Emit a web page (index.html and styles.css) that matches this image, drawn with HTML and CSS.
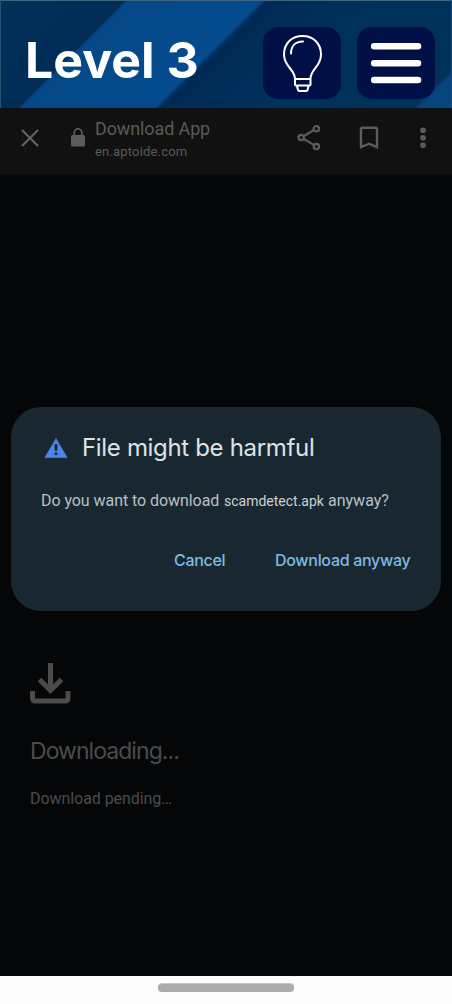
FILE: index.html
```html
<!DOCTYPE html>
<html lang="en">
<head>
<meta charset="utf-8">
<title>Level 3</title>
<link rel="stylesheet" href="styles.css">
</head>
<body>
<div class="screen">
  <header class="game-header">
    <h1 class="level">Level 3</h1>
    <button class="game-button" aria-label="Hint">
      <svg width="78" height="72" viewBox="0 0 78 72" fill="none" stroke="#fff" stroke-width="2" stroke-linecap="round" stroke-linejoin="round">
        <path d="M32 52C32 42 21 40 21 27.500C21 16 29 9 39.500 9S58 16 58 27.500C58 40 47.500 42 47.500 52ZM32 52V57.500Q32 58.500 33 58.500H46.500Q47.500 58.500 47.500 57.500V52M34 59L35 63Q35.500 64 36.500 64H43Q44 64 44.500 63L45.500 59"/>
        <path d="M28 26.500C28 19.500 32 14.500 40 14.500"/>
      </svg>
    </button>
    <button class="game-button" aria-label="Menu">
      <svg width="78" height="72" viewBox="0 0 78 72" stroke="#fff" stroke-width="6.600" stroke-linecap="round">
        <path d="M17.200 19.300H61M17.200 36.200H61M17.200 53H61"/>
      </svg>
    </button>
  </header>
  <div class="browser-bar">
    <svg class="close" width="20" height="20" viewBox="0 0 20 20" fill="none" stroke="#626262" stroke-width="2.200"><path d="M2 2L18 18M18 2L2 18"/></svg>
    <svg class="lock" width="16" height="20" viewBox="0 0 16 20"><rect x="1" y="7" width="14" height="11.500" rx="1.500" fill="#5c5c5c"/><path d="M4.200 8V4.700a3.800 3.800 0 0 1 7.600 0V8" fill="none" stroke="#5c5c5c" stroke-width="1.700"/></svg>
    <div class="site">
      <div class="site-title">Download App</div>
      <div class="site-url">en.aptoide.com</div>
    </div>
    <svg class="share" width="24" height="28" viewBox="0 0 24 28" fill="none" stroke="#5c5c5c" stroke-width="2.200"><circle cx="4.200" cy="13.500" r="2.700"/><circle cx="19.400" cy="4.700" r="2.700"/><circle cx="19.400" cy="22.500" r="2.700"/><path d="M6.500 12.200L17 6M6.500 14.800L17 21.100"/></svg>
    <svg class="bookmark" width="20" height="24" viewBox="0 0 20 24" fill="none" stroke="#5c5c5c" stroke-width="2.400"><path d="M2 21.200V3.200Q2 1.700 3.500 1.700H16.500Q18 1.700 18 3.200V21.200L10 17.700Z"/></svg>
    <svg class="more" width="6" height="22" viewBox="0 0 6 22" fill="#5c5c5c"><circle cx="3" cy="3.200" r="2.800"/><circle cx="3" cy="10.700" r="2.800"/><circle cx="3" cy="18.200" r="2.800"/></svg>
  </div>
  <main class="content">
    <section class="dialog">
      <div class="dialog-heading">
        <svg width="24" height="20" viewBox="0 0 24 20"><path d="M12 0L23.500 19.700H.5Z" fill="#4a86e8"/><path d="M12 6V12.700M12 14.300V17" stroke="#192830" stroke-width="2.700"/></svg>
        <h2 class="dialog-title">File might be harmful</h2>
      </div>
      <p class="question"><span class="ask">Do you want to download</span><span class="file">scamdetect.apk</span><span class="anyway">anyway?</span></p>
      <div class="actions"><button class="cancel">Cancel</button><button class="confirm">Download anyway</button></div>
    </section>
    <section class="progress">
      <svg width="42" height="42" viewBox="0 0 42 42" fill="none" stroke="#4b4b4b"><path d="M20.500 0V26M9.500 16.500L20.500 27.500L31.500 16.500" stroke-width="5"/><path d="M2.500 28V35Q2.500 38 5.500 38H35Q38 38 38 35V28" stroke-width="5"/></svg>
      <h3 class="downloading">Downloading...</h3>
      <p class="pending">Download pending…</p>
    </section>
  </main>
  <footer class="nav"><div class="handle"></div></footer>
</div>
</body>
</html>
```
FILE: styles.css
```css
* { box-sizing: border-box; }
body { margin: 0; background: #050608; font-family: Roboto, "Liberation Sans", sans-serif; }
h1, h2, h3, p { margin: 0; font-weight: 400; white-space: nowrap; }
button { border: 0; padding: 0; background: none; font: inherit; color: inherit; letter-spacing: inherit; }
svg { display: block; flex: none; }
.screen { width: 452px; height: 1004px; display: flex; flex-direction: column; overflow: hidden; }
.game-header {
  height: 108px; flex: none; display: flex; align-items: flex-start;
  padding: 25px 0 0 24px;
  border-top: 1px solid #406580; border-left: 1px solid #28506f; border-right: 1px solid #174a77;
  background: linear-gradient(135deg, #003158 0, #002d57 74px, #002d57 87px, #064887 90px, #034b8e 184px, #002a55 188px, #00315b 260px, #003158 367px, #064580 371px);
}
.level { width: 238px; color: #fff; font: 700 50px/68px Inter, sans-serif; }
.game-button { width: 78px; height: 72px; margin: 1px 16px 0 0; background: #000f45; border-radius: 15px; flex: none; }
.browser-bar { height: 67px; flex: none; display: flex; background: #111; border-bottom: 1px solid #0c0c0d; color: #5a5a5a; }
.close { margin: 20px 0 0 20px; }
.lock { margin: 20px 0 0 30px; }
.site { width: 201px; margin: 9px 0 0 9px; white-space: nowrap; }
.site-title { font-size: 18px; line-height: 23px; letter-spacing: -.12px; }
.site-url { font-size: 13px; line-height: 24px; letter-spacing: .18px; }
.share { margin: 16px 0 0 1px; }
.bookmark { margin: 18px 0 0 38px; }
.more { margin: 19px 0 0 41px; }
.content { flex: 1; padding: 232px 11px 0; }
.dialog { height: 204px; background: #192830; border-radius: 30px; padding: 23px 0 0 30px; }
.dialog-heading { display: flex; align-items: center; height: 36px; padding-left: 3px; }
.dialog-title { margin-left: 14px; color: #dfe2e3; font: 400 24px/36px Inter, sans-serif; letter-spacing: -.33px; }
.question { display: flex; align-items: baseline; margin-top: 24px; font-size: 16px; line-height: 22px; color: #b9bfc4; }
.ask { width: 183px; letter-spacing: -.06px; }
.file { width: 104px; font-size: 14px; color: #ccd0d3; }
.actions { display: flex; margin-top: 36px; color: #7cbbe4; font: 500 16px/24px Inter, sans-serif; letter-spacing: -.3px; white-space: nowrap; }
.cancel { margin-left: 133px; width: 101px; text-align: left; }
.progress { padding: 52px 0 0 19px; color: #4b4b4b; }
.downloading { margin-top: 31px; font: 400 23px/31px Inter, sans-serif; letter-spacing: -.95px; }
.pending { margin-top: 21px; font-size: 16px; line-height: 22px; letter-spacing: -.06px; }
.nav { height: 28px; flex: none; background: #fcfcfc; padding-top: 7px; }
.handle { width: 136px; height: 9px; margin-left: 158px; border-radius: 4px; background: #ababab; border-top: 1px solid #c8c8c8; }
```
